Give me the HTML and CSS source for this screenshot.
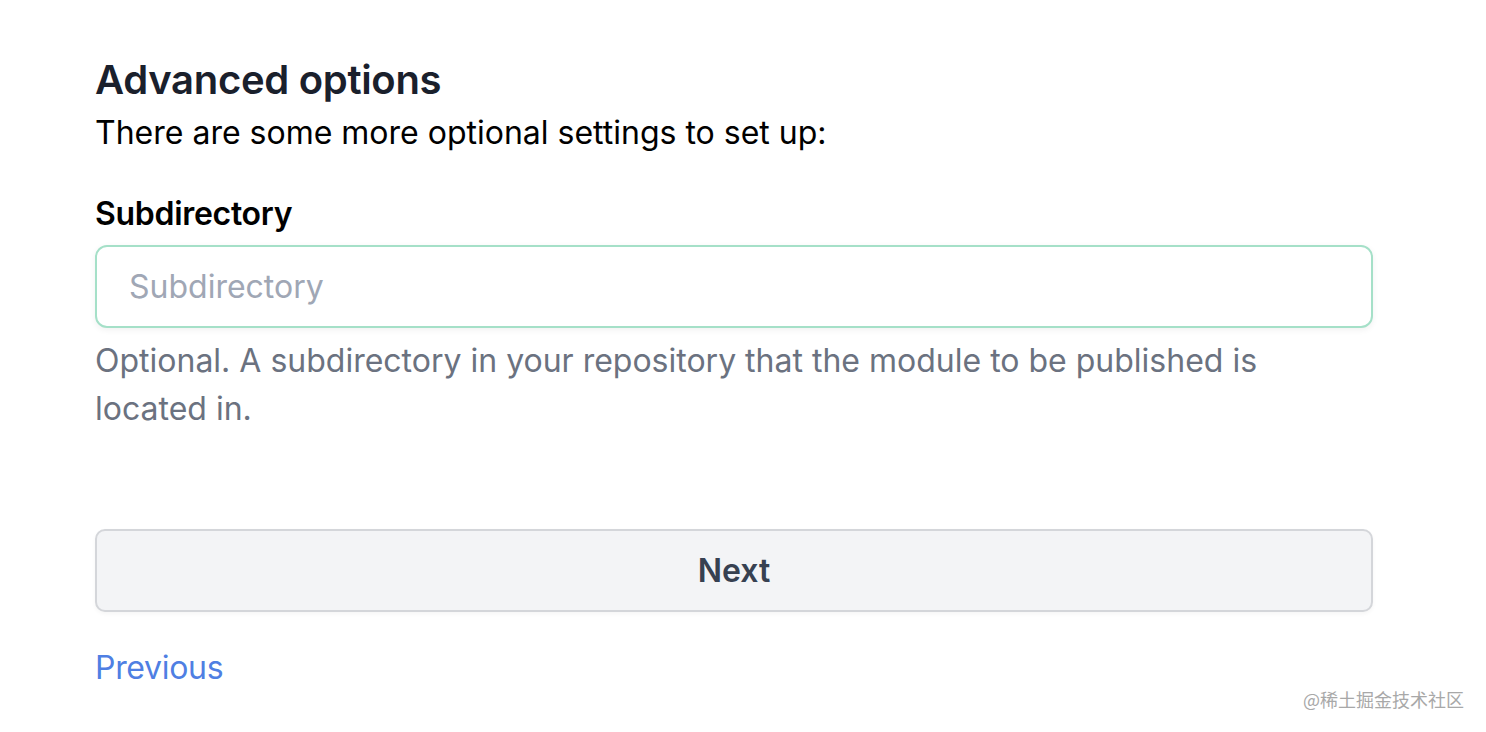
FILE: index.html
```html
<!DOCTYPE html>
<html lang="en">
<head>
<meta charset="utf-8">
<link rel="stylesheet" href="styles.css">
</head>
<body>
<main class="page">
  <h2 class="title">Advanced options</h2>
  <p class="subtitle">There are some more optional settings to set up:</p>
  <form class="form">
    <label class="label" for="subdir">Subdirectory</label>
    <input class="input" id="subdir" type="text" placeholder="Subdirectory">
    <p class="help">Optional. A subdirectory in your repository that the module to be published is located in.</p>
    <button class="btn" type="button">Next</button>
  </form>
  <a class="link" href="#">Previous</a>
</main>
<div class="watermark">@稀土掘金技术社区</div>
</body>
</html>
```
FILE: styles.css
```css
html, body {
  margin: 0;
  padding: 0;
  background: #ffffff;
}
body {
  font-family: Inter, "Noto Sans", sans-serif;
  color: #000;
  width: 1486px;
  height: 732px;
  overflow: hidden;
  position: relative;
}
.page {
  padding: 56px 113px 0 95px;
  display: flex;
  flex-direction: column;
}
.title {
  margin: 0;
  font-size: 40px;
  line-height: 48px;
  font-weight: 600;
  letter-spacing: -0.3px;
  color: #1a202c;
}
.subtitle {
  margin: 5px 0 0;
  font-size: 32px;
  line-height: 48px;
  color: #000;
}
.form {
  display: flex;
  flex-direction: column;
  margin-top: 33px;
}
.label {
  font-size: 32px;
  line-height: 48px;
  font-weight: 600;
  letter-spacing: -0.3px;
  color: #000;
}
.input {
  margin-top: 7px;
  height: 83px;
  box-sizing: border-box;
  border: 2px solid #a5e0c8;
  border-radius: 12px;
  padding: 0 32px;
  font-family: inherit;
  font-size: 32px;
  color: #111;
  outline: none;
  box-shadow: 0 2px 6px rgba(0,0,0,0.06);
}
.input::placeholder {
  color: #a0a7b5;
}
.help {
  margin: 9px 0 0;
  font-size: 32px;
  line-height: 48px;
  color: #6b7280;
  max-width: 1200px;
}
.btn {
  margin-top: 96px;
  height: 83px;
  box-sizing: border-box;
  border: 2px solid #d4d6da;
  border-radius: 10px;
  background: #f3f4f6;
  font-family: inherit;
  font-size: 32px;
  font-weight: 600;
  color: #374151;
  box-shadow: 0 2px 4px rgba(0,0,0,0.04);
}
.link {
  margin-top: 32px;
  align-self: flex-start;
  font-size: 32px;
  line-height: 48px;
  letter-spacing: -0.3px;
  color: #4f7fe3;
  text-decoration: none;
}
.watermark {
  position: absolute;
  right: 22px;
  bottom: 20px;
  font-family: "Noto Sans CJK SC", sans-serif;
  font-size: 18px;
  color: #a8a8a8;
}
```
